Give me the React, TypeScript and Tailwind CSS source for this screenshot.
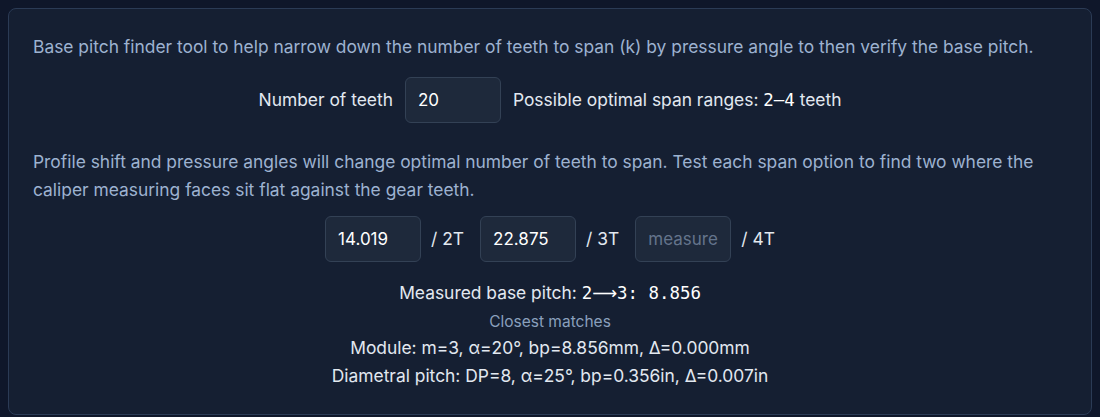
import { useState } from 'react'

const sans = { fontFamily: 'Inter, "Noto Sans", sans-serif' }
const mono = { fontFamily: '"DejaVu Sans Mono", "Liberation Mono", monospace' }

function NumberBox({
  value,
  placeholder,
  onChange,
}: {
  value: string
  placeholder?: string
  onChange: (v: string) => void
}) {
  return (
    <input
      type="text"
      value={value}
      placeholder={placeholder}
      onChange={(e) => onChange(e.target.value)}
      className="w-24 rounded-md border border-[#334155] bg-[#1e293b] px-3 py-2.5 text-[17px] leading-6 text-white outline-none placeholder:text-[#64748b]"
      style={sans}
    />
  )
}

export default function App() {
  const [teeth, setTeeth] = useState('20')
  const [spans, setSpans] = useState(['14.019', '22.875', ''])

  const setSpan = (i: number, v: string) =>
    setSpans((s) => s.map((x, j) => (j === i ? v : x)))

  return (
    <div className="min-h-screen bg-[#0f172a] p-2" style={sans}>
      <div className="rounded-lg border border-[#2b3b55] bg-[#151f32] px-6 pt-6 pb-6">
        <p className="text-[17.4px] leading-7 text-[#9db2d0]">
          Base pitch finder tool to help narrow down the number of teeth to span
          (k) by pressure angle to then verify the base pitch.
        </p>

        <div className="mt-4 flex items-center justify-center gap-3 text-[17.4px] text-[#e2e8f0]">
          <span>Number of teeth</span>
          <NumberBox value={teeth} onChange={setTeeth} />
          <span>
            Possible optimal span ranges:{' '}
            <span className="text-white" style={mono}>
              2–4
            </span>{' '}
            teeth
          </span>
        </div>

        <p className="mt-[25px] text-[17.4px] leading-7 text-[#9db2d0]">
          Profile shift and pressure angles will change optimal number of teeth
          to span. Test each span option to find two where the caliper measuring
          faces sit flat against the gear teeth.
        </p>

        <div className="mt-3 flex items-center justify-center gap-4 text-[17.4px] text-[#e2e8f0]">
          {['2T', '3T', '4T'].map((t, i) => (
            <div key={t} className="flex items-center gap-2.5">
              <NumberBox
                value={spans[i]}
                placeholder="measure"
                onChange={(v) => setSpan(i, v)}
              />
              <span>/ {t}</span>
            </div>
          ))}
        </div>

        <div className="mt-[17px] text-center text-[17.4px] leading-7 text-[#e2e8f0]">
          Measured base pitch:{' '}
          <span className="text-white" style={mono}>
            2<span style={{ fontFamily: '"DejaVu Sans", sans-serif' }}>⟶</span>3:{'\u00a0'}8.856
          </span>
        </div>

        <div className="mt-[5px] text-center text-[15.5px] leading-5 text-[#8aa0bd]">
          Closest matches
        </div>
        <div className="mt-0.5 text-center text-[17.4px] leading-7 text-[#e2e8f0]">
          <div>Module: m=3, α=20°, bp=8.856mm, Δ=0.000mm</div>
          <div>Diametral pitch: DP=8, α=25°, bp=0.356in, Δ=0.007in</div>
        </div>
      </div>
    </div>
  )
}
